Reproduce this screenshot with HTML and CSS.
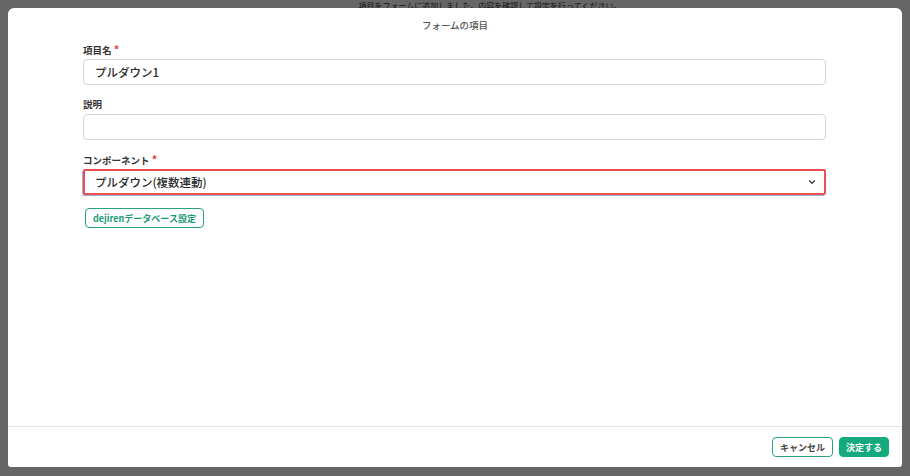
FILE: index.html
```html
<!DOCTYPE html>
<html lang="ja">
<head>
    <meta charset="UTF-8">
    <title>フォームの項目</title>
    <link rel="stylesheet" href="styles.css">
</head>
<body>
    <div class="backdrop-text">項目をフォームに追加しました。内容を確認して設定を行ってください。</div>

    <div class="overlay">
        <div class="modal">
            <div class="modal-header">フォームの項目</div>

            <div class="modal-body">
                <div class="field">
                    <label class="label">項目名 <span class="req">*</span></label>
                    <div class="input">プルダウン1</div>
                </div>

                <div class="field">
                    <label class="label">説明</label>
                    <div class="input"></div>
                </div>

                <div class="field">
                    <label class="label">コンポーネント <span class="req">*</span></label>
                    <div class="input select">
                        <span>プルダウン(複数連動)</span>
                        <svg width="10" height="10" viewBox="0 0 10 10"><path d="M2.5 3.8 L5 6.2 L7.5 3.8" fill="none" stroke="#444" stroke-width="1.4" stroke-linecap="round" stroke-linejoin="round"/></svg>
                    </div>
                </div>

                <button class="btn btn-outline db-btn">dejirenデータベース設定</button>
            </div>

            <div class="modal-footer">
                <button class="btn btn-outline">キャンセル</button>
                <button class="btn btn-primary">決定する</button>
            </div>
        </div>
    </div>
</body>
</html>
```

FILE: styles.css
```css
html, body {
    margin: 0;
    height: 100%;
}
body {
    font-family: "Noto Sans CJK JP", "Noto Sans", sans-serif;
    background: #fff;
    color: #333;
    position: relative;
    overflow: hidden;
}

/* 背景のページ(オーバーレイの下) */
.backdrop-text {
    text-align: center;
    font-size: 8px;
    color: #333;
    line-height: 10px;
    padding-top: 1px;
    margin-left: 70px;
}

.overlay {
    position: absolute;
    top: 0;
    left: 0;
    width: 100%;
    height: 100%;
    background: rgba(0, 0, 0, 0.6);
    padding: 8px;
    box-sizing: border-box;
}

.modal {
    background: #fff;
    height: 459px;
    border-radius: 6px 6px 3px 3px;
    display: flex;
    flex-direction: column;
}

.modal-header {
    text-align: center;
    font-size: 9.5px;
    font-weight: 500;
    color: #555;
    padding-top: 10px;
    height: 26px;
    box-sizing: border-box;
}

.modal-body {
    flex: 1;
    padding: 9px 76px 0 75px;
}

.field {
    margin-bottom: 13px;
}

.label {
    display: block;
    font-size: 9.5px;
    font-weight: 700;
    color: #333;
    height: 13px;
    line-height: 13px;
    margin-bottom: 3px;
}
.req {
    color: #e53e3e;
    font-size: 11px;
}

.input {
    height: 26px;
    border: 1px solid #d4d4d4;
    border-radius: 4px;
    box-sizing: border-box;
    padding: 0 11px;
    font-size: 11.5px;
    font-weight: 500;
    color: #2a2a2a;
    line-height: 24px;
}
.select {
    display: flex;
    justify-content: space-between;
    align-items: center;
    border: 2px solid #ec4f52;
    border-radius: 2px;
    box-shadow: -1px 1px 0 #9db3de;
    padding: 0 7px 0 10px;
}

.btn {
    font-family: inherit;
    font-size: 9px;
    font-weight: 700;
    border-radius: 4px;
    height: 20px;
    padding: 0 7px;
    cursor: pointer;
}
.btn-outline {
    background: #fff;
    color: #1a9b76;
    border: 1px solid #2aa37f;
}
.btn-primary {
    background: #14aa7d;
    color: #fff;
    border: 1px solid #14aa7d;
    padding: 0 6px;
}
.db-btn {
    display: block;
    margin: 1px 0 0 2px;
    padding: 0 7px;
}

.modal-footer {
    border-top: 1px solid #e4e4e4;
    display: flex;
    justify-content: flex-end;
    gap: 6px;
    padding: 10px 13px 10px 0;
}
.modal-footer .btn-outline {
    color: #444;
}
```
